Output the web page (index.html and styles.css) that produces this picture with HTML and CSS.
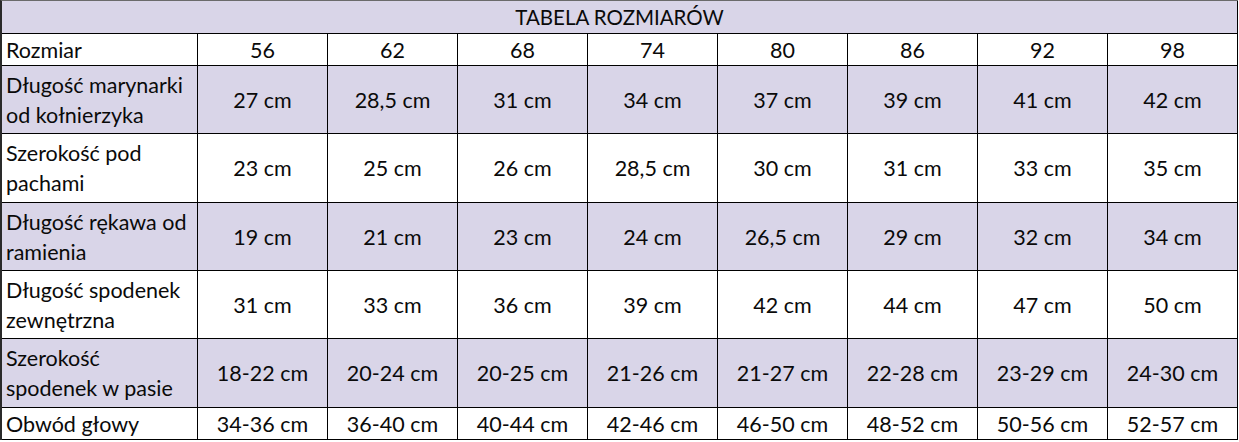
FILE: index.html
```html
<!DOCTYPE html>
<html lang="pl">
<head>
<meta charset="utf-8">
<title>Tabela rozmiarów</title>
<link rel="stylesheet" href="styles.css">
</head>
<body>
<div class="sheet">
  <div class="cell title">TABELA ROZMIARÓW</div>

  <div class="cell label">Rozmiar</div>
  <div class="cell">56</div><div class="cell">62</div><div class="cell">68</div><div class="cell">74</div>
  <div class="cell">80</div><div class="cell">86</div><div class="cell">92</div><div class="cell">98</div>

  <div class="cell label alt">Długość marynarki od kołnierzyka</div>
  <div class="cell alt">27 cm</div><div class="cell alt">28,5 cm</div><div class="cell alt">31 cm</div><div class="cell alt">34 cm</div>
  <div class="cell alt">37 cm</div><div class="cell alt">39 cm</div><div class="cell alt">41 cm</div><div class="cell alt">42 cm</div>

  <div class="cell label">Szerokość pod pachami</div>
  <div class="cell">23 cm</div><div class="cell">25 cm</div><div class="cell">26 cm</div><div class="cell">28,5 cm</div>
  <div class="cell">30 cm</div><div class="cell">31 cm</div><div class="cell">33 cm</div><div class="cell">35 cm</div>

  <div class="cell label alt">Długość rękawa od ramienia</div>
  <div class="cell alt">19 cm</div><div class="cell alt">21 cm</div><div class="cell alt">23 cm</div><div class="cell alt">24 cm</div>
  <div class="cell alt">26,5 cm</div><div class="cell alt">29 cm</div><div class="cell alt">32 cm</div><div class="cell alt">34 cm</div>

  <div class="cell label">Długość spodenek zewnętrzna</div>
  <div class="cell">31 cm</div><div class="cell">33 cm</div><div class="cell">36 cm</div><div class="cell">39 cm</div>
  <div class="cell">42 cm</div><div class="cell">44 cm</div><div class="cell">47 cm</div><div class="cell">50 cm</div>

  <div class="cell label alt">Szerokość spodenek w pasie</div>
  <div class="cell alt">18-22 cm</div><div class="cell alt">20-24 cm</div><div class="cell alt">20-25 cm</div><div class="cell alt">21-26 cm</div>
  <div class="cell alt">21-27 cm</div><div class="cell alt">22-28 cm</div><div class="cell alt">23-29 cm</div><div class="cell alt">24-30 cm</div>

  <div class="cell label">Obwód głowy</div>
  <div class="cell">34-36 cm</div><div class="cell">36-40 cm</div><div class="cell">40-44 cm</div><div class="cell">42-46 cm</div>
  <div class="cell">46-50 cm</div><div class="cell">48-52 cm</div><div class="cell">50-56 cm</div><div class="cell">52-57 cm</div>
</div>
</body>
</html>
```
FILE: styles.css
```css
html, body {
  margin: 0;
  padding: 0;
  background: #ffffff;
}

body {
  font-family: Lato, "Open Sans", sans-serif;
  font-size: 21.5px;
  color: #0a0a0a;
}

.sheet {
  display: grid;
  grid-template-columns: 196px repeat(8, 130px);
  grid-template-rows: 33px 32px 68px 69px 68px 68px 69px 32px;
  width: max-content;
  border-top: 1px solid #6b6b6b;
  border-left: 2px solid #2a2a2a;
}

.cell {
  box-sizing: border-box;
  border-right: 1px solid #000000;
  border-bottom: 1px solid #000000;
  display: flex;
  align-items: center;
  justify-content: center;
  text-align: center;
  line-height: 30px;
  background: #ffffff;
}

.title {
  grid-column: 1 / -1;
  background: #d9d5e8;
  font-size: 20.5px;
}

.label {
  justify-content: flex-start;
  text-align: left;
  padding-left: 4px;
  padding-right: 6px;
}

.alt {
  background: #d9d5e8;
}
```
